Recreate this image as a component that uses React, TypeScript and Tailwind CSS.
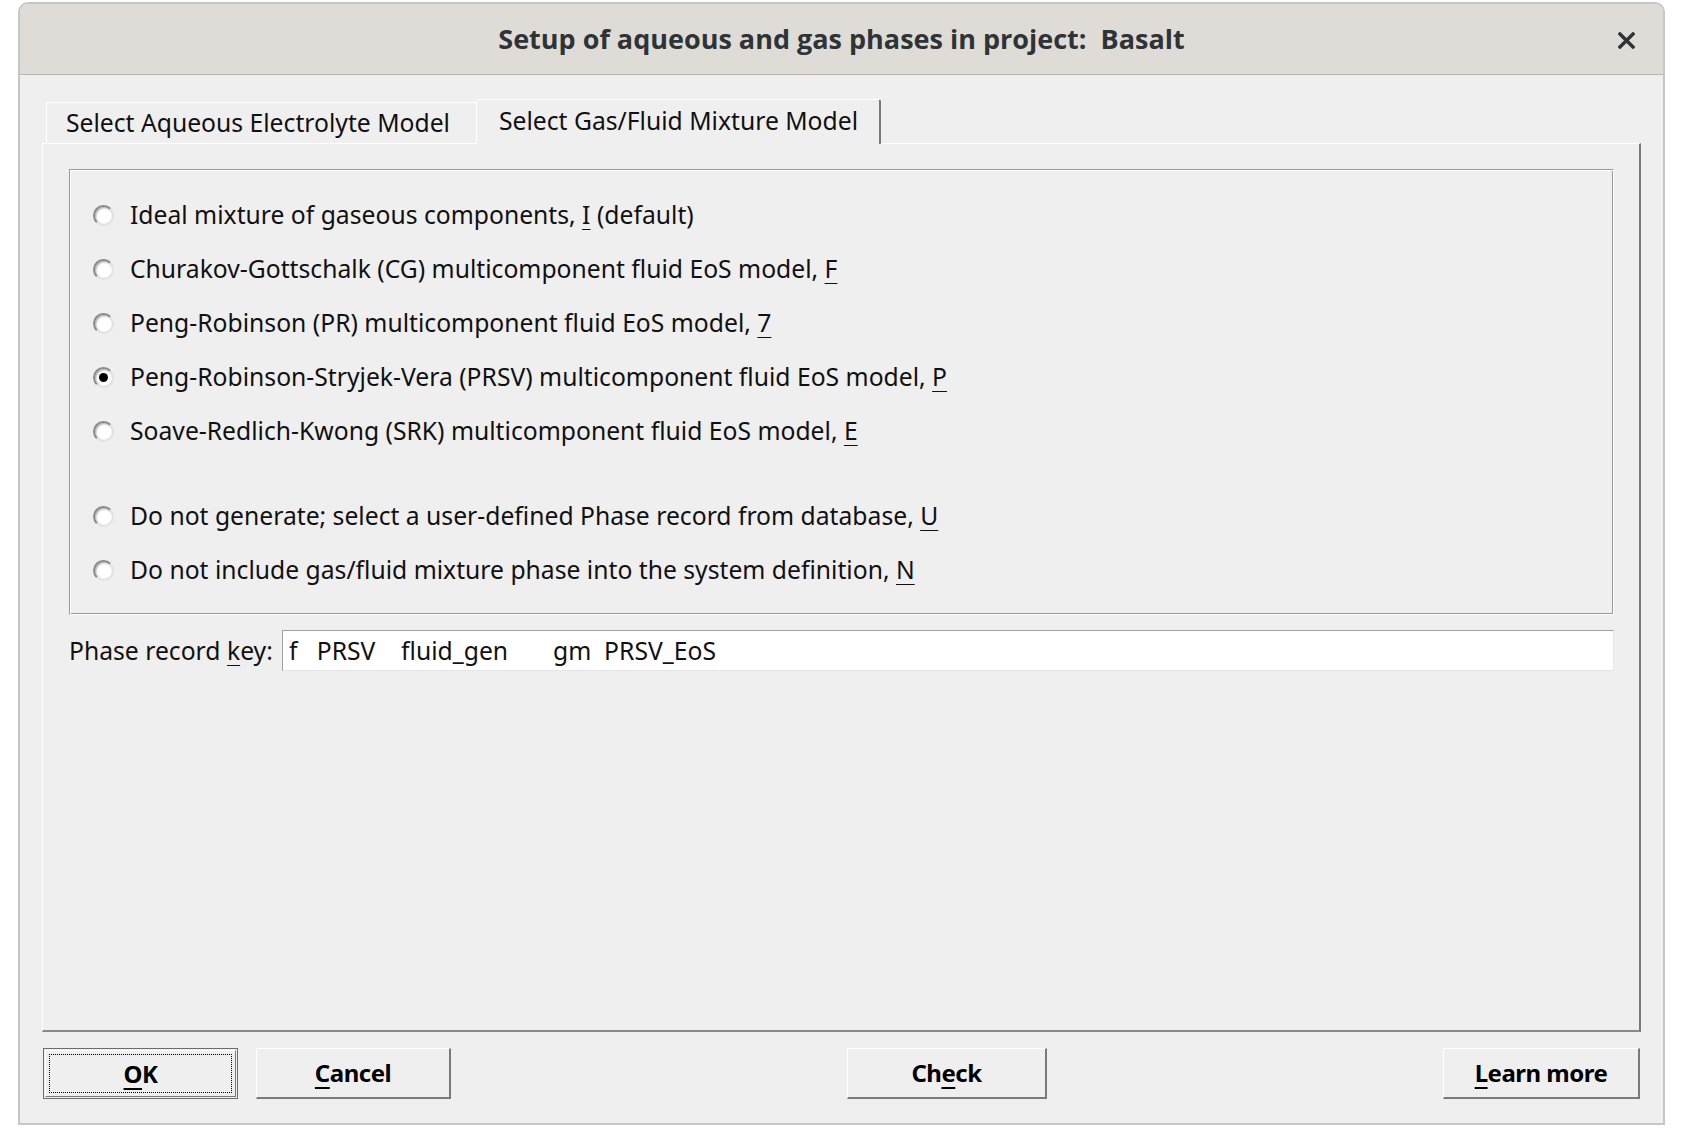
import React from 'react';

const font = { fontFamily: '"Noto Sans", "Open Sans", sans-serif' };

type Opt = { pre: string; key: string; post?: string; checked?: boolean };

const topOptions: Opt[] = [
  { pre: 'Ideal mixture of gaseous components, ', key: 'I', post: ' (default)' },
  { pre: 'Churakov-Gottschalk (CG) multicomponent fluid EoS model, ', key: 'F' },
  { pre: 'Peng-Robinson (PR) multicomponent fluid EoS model, ', key: '7' },
  { pre: 'Peng-Robinson-Stryjek-Vera (PRSV) multicomponent fluid EoS model, ', key: 'P', checked: true },
  { pre: 'Soave-Redlich-Kwong (SRK) multicomponent fluid EoS model, ', key: 'E' },
];

const bottomOptions: Opt[] = [
  { pre: 'Do not generate; select a user-defined Phase record from database, ', key: 'U' },
  { pre: 'Do not include gas/fluid mixture phase into the system definition, ', key: 'N' },
];

function Radio({ checked }: { checked?: boolean }) {
  return (
    <div className="w-[21px] h-[21px] rounded-full border-2 border-[#8a8a8a] border-r-[#e2e2e2] border-b-[#e2e2e2] bg-white shadow-[inset_1px_1px_2px_rgba(0,0,0,0.35)] flex items-center justify-center shrink-0">
      {checked && <div className="w-[9px] h-[9px] rounded-full bg-black" />}
    </div>
  );
}

function OptionRow({ opt }: { opt: Opt }) {
  return (
    <div className="h-[54px] flex items-center pl-[23px] gap-[16px]">
      <Radio checked={opt.checked} />
      <span className="text-[24.7px] text-[#111] whitespace-pre">
        {opt.pre}
        <span className="underline underline-offset-[5px] decoration-1">{opt.key}</span>
        {opt.post}
      </span>
    </div>
  );
}

function Button({ w, children, isDefault }: { w: string; children: React.ReactNode; isDefault?: boolean }) {
  return (
    <button
      className={`${w} h-[51px] bg-[#efefef] text-[24px] font-bold text-black tracking-[-0.5px] ${
        isDefault
          ? 'border border-[#6e6e6e] p-[1px]'
          : 'border border-white border-r-[#7a7a7a] border-b-[#7a7a7a] border-r-2 border-b-2'
      }`}
    >
      {isDefault ? (
        <div className="w-full h-full border border-white border-r-[#7a7a7a] border-b-[#7a7a7a] p-[3px]">
          <div className="w-full h-full border border-dotted border-black flex items-center justify-center">
            {children}
          </div>
        </div>
      ) : (
        <div className="flex items-center justify-center">{children}</div>
      )}
    </button>
  );
}

const u = 'underline underline-offset-[5px] decoration-2';

export default function App() {
  return (
    <div className="w-[1684px] h-[1144px] bg-white pt-[2px] pl-[18px]" style={font}>
      <div className="w-[1647px] h-[1123px] border-2 border-[#c6c6c6] rounded-t-[10px] bg-[#efefef] flex flex-col overflow-hidden">
        {/* title bar */}
        <div className="h-[71px] shrink-0 bg-[#dfdcd8] border-b border-[#bcb7b2] flex items-center justify-center relative">
          <span className="text-[27px] font-bold text-[#2e3436]" style={{ fontFamily: '"Open Sans", "Noto Sans", sans-serif' }}>
            Setup of aqueous and gas phases in project:&nbsp; Basalt
          </span>
          <span className="absolute right-[28px] top-[28px]">
            <svg width="17" height="17" viewBox="0 0 17 17">
              <path d="M2 2 L15 15 M15 2 L2 15" stroke="#2e3436" strokeWidth="3.4" strokeLinecap="square" />
            </svg>
          </span>
        </div>

        <div className="flex-1 flex flex-col px-[22px]">
          {/* tabs */}
          <div className="h-[68px] flex items-end">
            <div className="ml-[4px] w-[430px] h-[41px] border-t border-l border-white rounded-tl-[3px] flex items-center pl-[19px] text-[24.7px] text-[#111]">
              Select Aqueous Electrolyte Model
            </div>
            <div className="w-[405px] h-[45px] border-t border-l border-white border-r-2 border-r-[#7a7a7a] rounded-t-[3px] flex items-center pl-[22px] pb-[2px] text-[24.7px] text-[#111] relative top-[1px] bg-[#efefef] z-10">
              Select Gas/Fluid Mixture Model
            </div>
          </div>

          {/* panel */}
          <div className="h-[889px] border-t border-l border-white border-r-2 border-r-[#7a7a7a] border-b-2 border-b-[#8a8a8a] pt-[25px] pl-[26px] pr-[25px]">
            <div className="w-[1545px] h-[446px] border border-[#9a9a9a] border-r-white border-b-white shadow-[inset_1px_1px_0_#fff,inset_-1px_-1px_0_#9a9a9a] pt-[18px]">
              {topOptions.map((o) => (
                <OptionRow key={o.key} opt={o} />
              ))}
              <div className="h-[31px]" />
              {bottomOptions.map((o) => (
                <OptionRow key={o.key} opt={o} />
              ))}
            </div>

            <div className="mt-[15px] flex items-center w-[1545px]">
              <span className="w-[213px] shrink-0 text-[24.7px] text-[#111]">
                Phase record <span className="underline underline-offset-[5px] decoration-1">k</span>ey:
              </span>
              <div className="flex-1 h-[41px] bg-white border border-[#a0a0a0] border-r-[#e6e6e6] border-b-[#e6e6e6] flex items-center pl-[6px] text-[24.7px] text-[#111] whitespace-pre">
                f   PRSV    fluid_gen       gm  PRSV_EoS
              </div>
            </div>
          </div>

          {/* buttons */}
          <div className="mt-[16px] ml-[1px] mr-[1px] flex items-center">
            <Button w="w-[195px]" isDefault>
              <span>
                <span className={u}>O</span>K
              </span>
            </Button>
            <div className="ml-[18px]">
              <Button w="w-[195px]">
                <span>
                  <span className={u}>C</span>ancel
                </span>
              </Button>
            </div>
            <div className="ml-[396px]">
              <Button w="w-[200px]">
                <span>
                  Ch<span className={u}>e</span>ck
                </span>
              </Button>
            </div>
            <div className="ml-auto">
              <Button w="w-[197px]">
                <span>
                  <span className={u}>L</span>earn more
                </span>
              </Button>
            </div>
          </div>
        </div>
      </div>
    </div>
  );
}
